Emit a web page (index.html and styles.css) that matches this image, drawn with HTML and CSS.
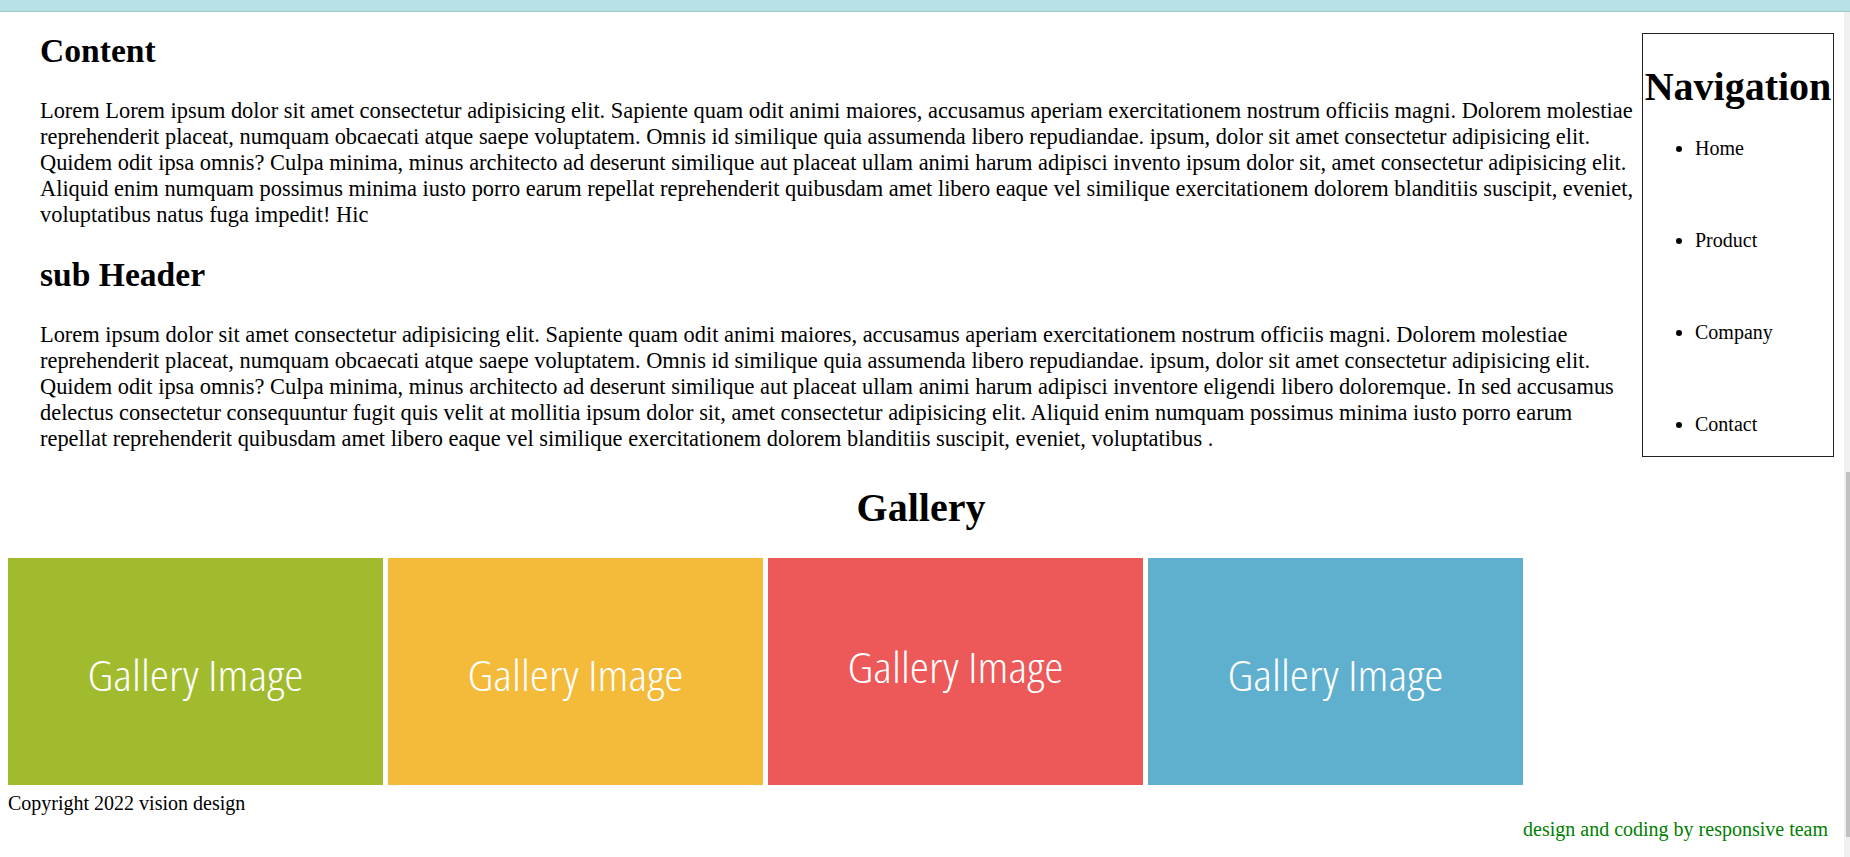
FILE: index.html
```html
<!DOCTYPE html>
<html lang="en">
<head>
<meta charset="utf-8">
<title>vision design</title>
<link rel="stylesheet" href="styles.css">
</head>
<body>
<header class="topbar"></header>
<div class="page">
  <div class="layout">
    <section class="content">
      <h2>Content</h2>
      <p>Lorem Lorem ipsum dolor sit amet consectetur adipisicing elit. Sapiente quam odit animi maiores, accusamus aperiam exercitationem nostrum officiis magni. Dolorem molestiae reprehenderit placeat, numquam obcaecati atque saepe voluptatem. Omnis id similique quia assumenda libero repudiandae. ipsum, dolor sit amet consectetur adipisicing elit. Quidem odit ipsa omnis? Culpa minima, minus architecto ad deserunt similique aut placeat ullam animi harum adipisci invento ipsum dolor sit, amet consectetur adipisicing elit. Aliquid enim numquam possimus minima iusto porro earum repellat reprehenderit quibusdam amet libero eaque vel similique exercitationem dolorem blanditiis suscipit, eveniet, voluptatibus natus fuga impedit! Hic</p>
      <h2>sub Header</h2>
      <p>Lorem ipsum dolor sit amet consectetur adipisicing elit. Sapiente quam odit animi maiores, accusamus aperiam exercitationem nostrum officiis magni. Dolorem molestiae reprehenderit placeat, numquam obcaecati atque saepe voluptatem. Omnis id similique quia assumenda libero repudiandae. ipsum, dolor sit amet consectetur adipisicing elit. Quidem odit ipsa omnis? Culpa minima, minus architecto ad deserunt similique aut placeat ullam animi harum adipisci inventore eligendi libero doloremque. In sed accusamus delectus consectetur consequuntur fugit quis velit at mollitia ipsum dolor sit, amet consectetur adipisicing elit. Aliquid enim numquam possimus minima iusto porro earum repellat reprehenderit quibusdam amet libero eaque vel similique exercitationem dolorem blanditiis suscipit, eveniet, voluptatibus .</p>
    </section>
    <nav class="sidenav">
      <h1>Navigation</h1>
      <ul>
        <li>Home</li>
        <li>Product</li>
        <li>Company</li>
        <li>Contact</li>
      </ul>
    </nav>
  </div>
  <section class="gallery">
    <h1>Gallery</h1>
    <div class="tiles">
      <div class="tile tile-green"><span class="tile-label">Gallery Image</span></div>
      <div class="tile tile-yellow"><span class="tile-label">Gallery Image</span></div>
      <div class="tile tile-red"><span class="tile-label tile-label-high">Gallery Image</span></div>
      <div class="tile tile-blue"><span class="tile-label">Gallery Image</span></div>
    </div>
  </section>
  <footer class="footer">
    <div class="copyright">Copyright 2022 vision design</div>
    <div class="credit">design and coding by responsive team</div>
  </footer>
</div>
<div class="scrollbar"><div class="scrollbar-thumb"></div></div>
</body>
</html>
```

FILE: styles.css
```css
html {
  overflow: hidden;
}

body {
  margin: 0;
  font-family: "Liberation Serif", "Times New Roman", serif;
  font-size: 20px;
  color: #000;
  background: #fff;
}

.topbar {
  height: 11px;
  background: #b7e1e4;
  border-bottom: 1px solid #9fc6ca;
}

.page {
  padding: 0 16px 0 8px;
}

.layout {
  display: flex;
  align-items: flex-start;
}

.content {
  flex: 1;
  min-width: 0;
  padding: 0 1px 0 32px;
  font-size: 22.4px;
}

.content h2 {
  font-size: 33.6px;
  font-weight: bold;
  margin: 27.9px 0;
}

.content h2:first-child {
  margin-top: 20.4px;
}

.content p {
  margin: 22.4px 0;
}

.sidenav {
  width: 192px;
  box-sizing: border-box;
  border: 1px solid #222;
  margin-top: 21px;
  padding-top: 2px;
}

.sidenav h1 {
  font-size: 40px;
  font-weight: bold;
  text-align: center;
  margin: 26.8px 0;
  white-space: nowrap;
}

.sidenav ul {
  margin: 20px 0;
  padding-left: 52px;
  display: flex;
  flex-direction: column;
  gap: 69px;
}

.gallery h1 {
  font-size: 40px;
  font-weight: bold;
  text-align: center;
  margin: 9.7px 0 27.1px;
}

.tiles {
  display: flex;
  gap: 5px;
  margin-bottom: 6.9px;
}

.tile {
  width: 375px;
  height: 227px;
  display: flex;
  align-items: center;
  justify-content: center;
  overflow: hidden;
}

.tile-green { background: #a0bc2e; }
.tile-yellow { background: #f4ba3a; }
.tile-red { background: #ed5859; }
.tile-blue { background: #5fb0cf; }

.tile-label {
  font-family: "Open Sans", "Liberation Sans", sans-serif;
  font-weight: 300;
  font-stretch: 75%;
  font-size: 43px;
  color: #fff;
  white-space: nowrap;
  transform: scaleX(1.13);
  margin-top: 4.8px;
}

.tile-label-high {
  margin-top: 0;
  margin-bottom: 9.6px;
}

.copyright {
  line-height: 23px;
}

.credit {
  text-align: right;
  color: #008000;
  padding-right: 6px;
  margin-top: 3px;
}

.scrollbar {
  position: fixed;
  top: 12px;
  right: 0;
  bottom: 0;
  width: 6px;
  background: #f0f0f0;
}

.scrollbar-thumb {
  position: absolute;
  top: 460px;
  height: 365px;
  right: 0;
  width: 4px;
  background: #c1c1c1;
}
```
